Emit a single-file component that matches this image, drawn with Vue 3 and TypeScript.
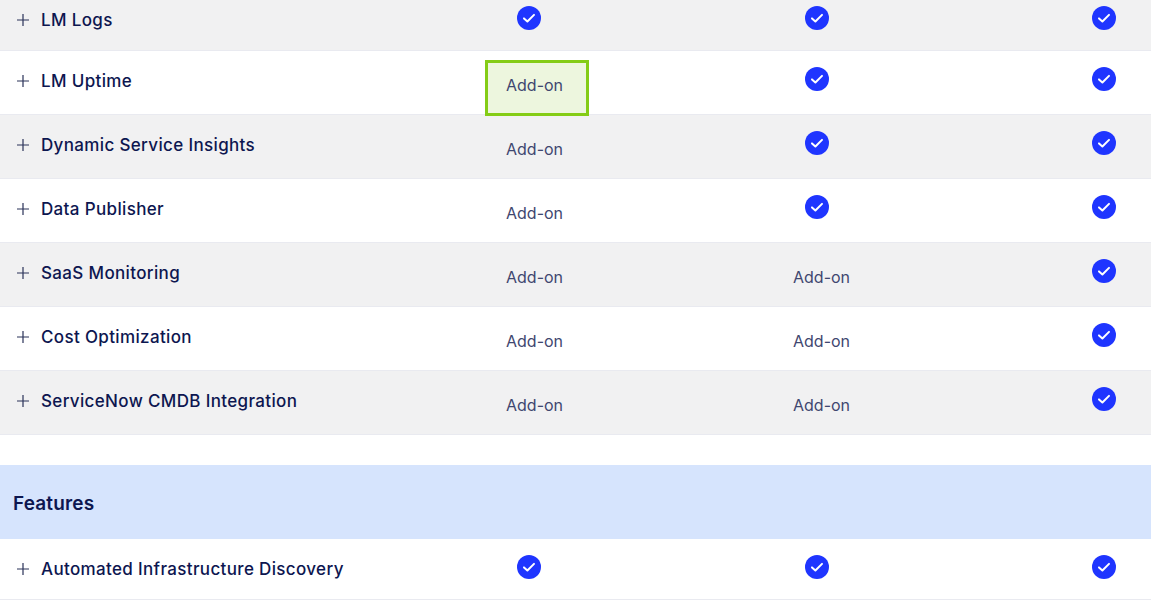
<script setup lang="ts">
type Cell = 'check' | 'addon'
interface Row { name: string; cells: Cell[]; mark?: boolean }

const top: Row[] = [
  { name: 'LM Logs', cells: ['check', 'check', 'check'] },
  { name: 'LM Uptime', cells: ['addon', 'check', 'check'], mark: true },
  { name: 'Dynamic Service Insights', cells: ['addon', 'check', 'check'] },
  { name: 'Data Publisher', cells: ['addon', 'check', 'check'] },
  { name: 'SaaS Monitoring', cells: ['addon', 'addon', 'check'] },
  { name: 'Cost Optimization', cells: ['addon', 'addon', 'check'] },
  { name: 'ServiceNow CMDB Integration', cells: ['addon', 'addon', 'check'] },
]
const features: Row[] = [
  { name: 'Automated Infrastructure Discovery', cells: ['check', 'check', 'check'] },
]
</script>

<template>
  <div class="page">
    <section class="table">
      <div v-for="row in top" :key="row.name" class="row">
        <div class="name">
          <svg class="plus" width="14" height="14" viewBox="0 0 14 14"><path d="M7 1v12M1 7h12" stroke="#2a3259" stroke-width="1.2" fill="none" /></svg>
          <span>{{ row.name }}</span>
        </div>
        <div v-for="(c, i) in row.cells" :key="i" class="cell" :class="{ marked: row.mark && i === 0 }">
          <svg v-if="c === 'check'" class="check" width="24" height="24" viewBox="0 0 24 24">
            <circle cx="12" cy="12" r="12" fill="#1f35ff" />
            <path d="M7 12.4l3.4 3.1 6.6-6.6" stroke="#fff" stroke-width="2" fill="none" stroke-linecap="round" stroke-linejoin="round" />
          </svg>
          <span v-else class="addon">Add-on</span>
        </div>
      </div>
    </section>
    <h2 class="heading">Features</h2>
    <section>
      <div v-for="row in features" :key="row.name" class="row feature">
        <div class="name">
          <svg class="plus" width="14" height="14" viewBox="0 0 14 14"><path d="M7 1v12M1 7h12" stroke="#2a3259" stroke-width="1.2" fill="none" /></svg>
          <span>{{ row.name }}</span>
        </div>
        <div v-for="(c, i) in row.cells" :key="i" class="cell">
          <svg class="check" width="24" height="24" viewBox="0 0 24 24">
            <circle cx="12" cy="12" r="12" fill="#1f35ff" />
            <path d="M7 12.4l3.4 3.1 6.6-6.6" stroke="#fff" stroke-width="2" fill="none" stroke-linecap="round" stroke-linejoin="round" />
          </svg>
        </div>
      </div>
    </section>
  </div>
</template>

<style>
html, body { margin: 0; overflow: hidden; background: #fff; }
</style>

<style scoped>
.page {
  width: 1151px;
  height: 600px;
  overflow: hidden;
  font-family: Inter, "Liberation Sans", sans-serif;
  color: #0d1650;
}
.table { margin-top: -10px; }
.row {
  display: grid;
  grid-template-columns: 485px 288px 287px 91px;
  height: 64px;
  box-sizing: border-box;
  border-bottom: 1px solid #e9eaf0;
  background: #fff;
}
.table .row:first-child { height: 61px; }
.table .row:nth-child(odd) { background: #f1f1f2; }
.name {
  display: flex;
  align-items: flex-start;
  gap: 11px;
  padding: 20px 0 0 16px;
  font-size: 17px;
  font-weight: 500;
  line-height: 21px;
  letter-spacing: 0.35px;
}
.plus { margin-top: 3px; flex: none; }
.cell { padding-top: 16px; box-sizing: border-box; }
.check { display: block; margin-left: 32px; }
.addon {
  display: block;
  margin: 9px 0 0 21px;
  font-size: 16px;
  line-height: 18px;
  color: #3f4770;
}
.cell:nth-child(3) .addon { margin-left: 20px; }
.marked {
  position: relative;
  width: 104px;
  height: 56px;
  margin-top: 9px;
  margin-bottom: -2px;
  padding-top: 7px;
  border: 3px solid #84cc16;
  background: #edf6de;
}
.marked .addon { margin: 6px 0 0 18px; }
.heading {
  margin: 30px 0 0;
  height: 74px;
  box-sizing: border-box;
  padding: 27px 0 0 13px;
  background: #d6e4fd;
  font-size: 19px;
  font-weight: 600;
  line-height: 24px;
  letter-spacing: 0.15px;
  color: #0d1650;
}
.feature { height: 61px; }
.feature .name { padding-top: 20px; }
</style>
